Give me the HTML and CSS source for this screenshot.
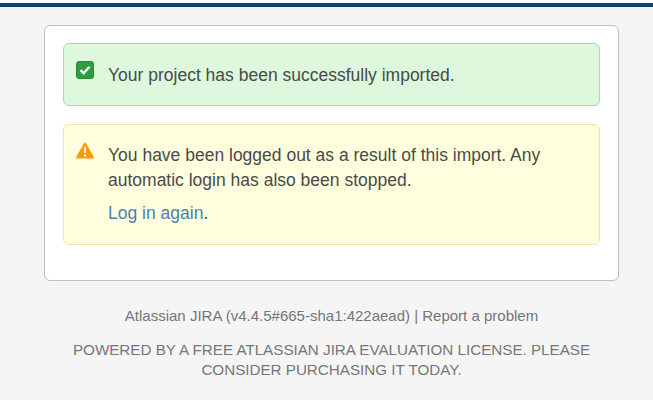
FILE: index.html
```html
<html>
<head>
<link rel="stylesheet" href="styles.css">
</head>
<body>
<div class="topBar"></div>
<div class="panel">
  <div class="msgBox successBox">
    <svg class="msgIcon" width="18" height="18" viewBox="0 0 18 18">
      <rect x="0.5" y="0.5" width="17" height="17" rx="2.5" fill="#2c9e3f" stroke="#2a8a3a"/>
      <path d="M4.5 9.2l3 3 6-6.4" fill="none" stroke="#fff" stroke-width="2.4"/>
    </svg>
    <div class="msgText">
      <p>Your project has been successfully imported.</p>
    </div>
  </div>
  <div class="msgBox warningBox">
    <svg class="msgIcon" width="18" height="18" viewBox="0 0 18 18">
      <path d="M9 1.5L17 15.5H1z" fill="#fb9a0e" stroke="#fb9a0e" stroke-width="2" stroke-linejoin="round"/>
      <rect x="8" y="5" width="2" height="6" fill="#fff"/>
      <rect x="8" y="12.5" width="2" height="2" fill="#fff"/>
    </svg>
    <div class="msgText">
      <p>You have been logged out as a result of this import. Any automatic login has also been stopped.</p>
      <p class="loginLine"><a href="#">Log in again</a>.</p>
    </div>
  </div>
</div>
<div class="footer">
  <p>Atlassian JIRA (v4.4.5#665-sha1:422aead) | Report a problem</p>
  <p class="license">POWERED BY A FREE ATLASSIAN JIRA EVALUATION LICENSE. PLEASE CONSIDER PURCHASING IT TODAY.</p>
</div>
</body>
</html>
```

FILE: styles.css
```css
html, body {
    margin: 0;
    height: 100%;
}

body {
    background-color: #f5f5f5;
    font-family: "Liberation Sans", Arial, sans-serif;
    color: #4a4a4a;
    overflow: hidden;
}

p {
    margin: 0;
}

.topBar {
    height: 4px;
    margin-top: 3px;
    background-color: #114274;
    box-shadow: 0 -3px 0 #fff;
}

.panel {
    margin: 18px 0 0 44px;
    padding: 17px 18px 0;
    width: 537px;
    height: 237px;
    background-color: #fff;
    border: 1px solid #bfbfbf;
    border-radius: 6px;
}

.msgBox {
    display: flex;
    box-sizing: border-box;
    border-radius: 6px;
    padding: 17px 12px 0;
    font-size: 17.5px;
    line-height: 25px;
}

.successBox {
    height: 63px;
    margin-bottom: 18px;
    background-color: #ddf8dd;
    border: 1px solid #abd7b0;
}

.successBox .msgText {
    padding-top: 2px;
}

.warningBox {
    height: 121px;
    background-color: #ffffdd;
    border: 1px solid #f5e3a6;
}

.msgIcon {
    flex: none;
    margin-right: 14px;
}

.msgText {
    flex: 1;
    padding-top: 1px;
    padding-right: 12px;
}

.loginLine {
    margin-top: 8px;
}

a {
    color: #4a7fb5;
    text-decoration: none;
}

.footer {
    margin: 25px 0 0 10px;
    text-align: center;
    font-size: 15px;
    line-height: 20px;
    color: #767676;
}

.license {
    margin: 14px auto 0;
    width: 540px;
    font-size: 15.2px;
}
```
